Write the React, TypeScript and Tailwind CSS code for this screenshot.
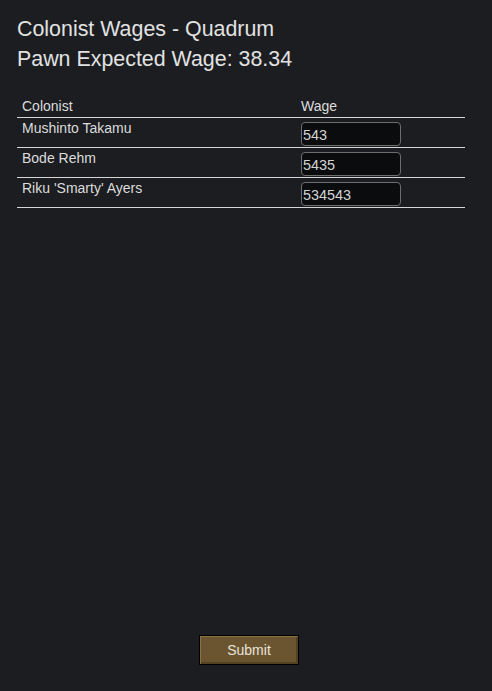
const rows = [
  { name: "Mushinto Takamu", wage: "543" },
  { name: "Bode Rehm", wage: "5435" },
  { name: "Riku 'Smarty' Ayers", wage: "534543" },
];

export default function App() {
  return (
    <div className="flex h-[691px] w-[492px] flex-col bg-[#1b1d21] px-[17px] font-['Liberation_Sans',Arial,sans-serif] text-[#dcdcdc]">
      <div className="pt-[14px] text-[21.4px] leading-[30px] text-[#e2e2e2]">
        <div>Colonist Wages - Quadrum</div>
        <div>Pawn Expected Wage: 38.34</div>
      </div>

      <div className="mt-[24px] w-[448px] text-[14px]">
        <div className="flex h-[20px] items-end border-b border-[#d6d6d6] pb-[3px] leading-[15px]">
          <div className="w-[284px] pl-[5px]">Colonist</div>
          <div>Wage</div>
        </div>
        {rows.map((r) => (
          <div key={r.name} className="flex h-[30px] border-b border-[#d6d6d6]">
            <div className="w-[284px] pl-[5px] pt-[3px] leading-[15px]">{r.name}</div>
            <div className="pt-[4px]">
              <input
                defaultValue={r.wage}
                className="h-[24px] w-[100px] rounded-[4px] border border-[#6e6e6e] bg-[#0b0c0e] px-[1px] pt-[2px] text-[14.4px] text-[#d4d4d4] outline-none"
              />
            </div>
          </div>
        ))}
      </div>

      <div className="mt-auto mb-[26px] flex justify-center pl-[6px]">
        <button className="h-[30px] w-[100px] border border-black bg-[#6b5531] text-[14px] text-[#e8e4dc] shadow-[inset_1px_1px_0_#8a7248,inset_-2px_-2px_0_#54411f]">
          Submit
        </button>
      </div>
    </div>
  );
}
